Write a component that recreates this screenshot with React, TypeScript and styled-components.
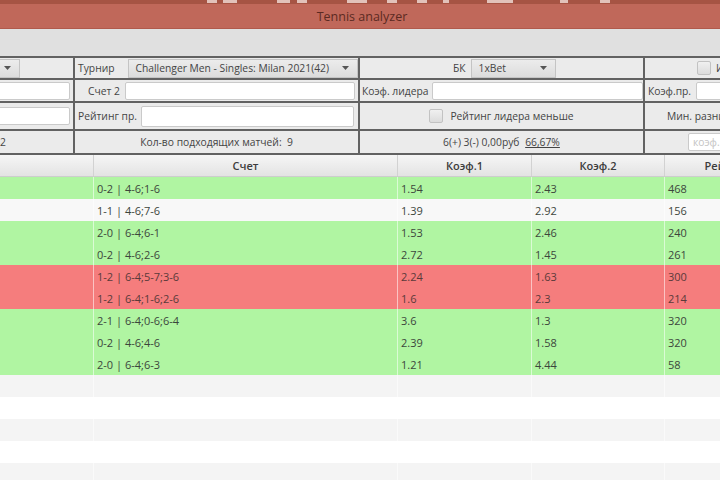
import styled, { createGlobalStyle } from "styled-components";

type RowKind = "win" | "loss" | "plain";
type Match = { score: string; k1: string; k2: string; rating: string; kind: RowKind };

const matches: Match[] = [
  { score: "0-2 | 4-6;1-6", k1: "1.54", k2: "2.43", rating: "468", kind: "win" },
  { score: "1-1 | 4-6;7-6", k1: "1.39", k2: "2.92", rating: "156", kind: "plain" },
  { score: "2-0 | 6-4;6-1", k1: "1.53", k2: "2.46", rating: "240", kind: "win" },
  { score: "0-2 | 4-6;2-6", k1: "2.72", k2: "1.45", rating: "261", kind: "win" },
  { score: "1-2 | 6-4;5-7;3-6", k1: "2.24", k2: "1.63", rating: "300", kind: "loss" },
  { score: "1-2 | 6-4;1-6;2-6", k1: "1.6", k2: "2.3", rating: "214", kind: "loss" },
  { score: "2-1 | 6-4;0-6;6-4", k1: "3.6", k2: "1.3", rating: "320", kind: "win" },
  { score: "0-2 | 4-6;4-6", k1: "2.39", k2: "1.58", rating: "320", kind: "win" },
  { score: "2-0 | 6-4;6-3", k1: "1.21", k2: "4.44", rating: "58", kind: "win" },
];

const rowBg: Record<RowKind, string> = {
  win: "#b0f5a2",
  loss: "#f57d7d",
  plain: "#f8f8f8",
};

// light blocks of the strip cut off at the very top of the shot
const stripBlocks = [
  [207, 10], [223, 14], [277, 13], [297, 10], [347, 20], [387, 10],
  [417, 10], [443, 6], [487, 13], [500, 13], [560, 8], [600, 10],
];

const GlobalStyle = createGlobalStyle`
  body {
    margin: 0;
    font-family: "Open Sans", "DejaVu Sans", sans-serif;
    font-size: 11px;
    color: #3a3a3a;
  }
`;

function Arrow() {
  return (
    <svg width="7" height="4" viewBox="0 0 7 4">
      <path d="M0 0 L7 0 L3.5 4 Z" fill="#555" />
    </svg>
  );
}

function App() {
  return (
    <Window>
      <GlobalStyle />
      <TitleBar>
        <Strip width="720" height="4" viewBox="0 0 720 4">
          <rect x="0" y="0" width="720" height="4" fill="#a65444" />
          {stripBlocks.map(([x, w]) => (
            <rect key={x} x={x} y="0" width={w} height="3" fill="#e2c2ba" />
          ))}
        </Strip>
        <Title>Tennis analyzer</Title>
      </TitleBar>
      <MenuBand />

      <Form>
        <Cell>
          <Combo width={120}>
            <span />
            <Arrow />
          </Combo>
        </Cell>
        <Cell pad={3}>
          <Label>Турнир</Label>
          <Combo grow style={{ marginLeft: 13 }}>
            <span>Challenger Men - Singles: Milan 2021(42)</span>
            <Arrow />
          </Combo>
        </Cell>
        <Cell pad={93}>
          <Label>БК</Label>
          <Combo width={85} style={{ marginLeft: 5 }}>
            <span>1xBet</span>
            <Arrow />
          </Combo>
        </Cell>
        <Cell pad={52}>
          <Check />
          <Label style={{ marginLeft: 5 }}>Игнорировать</Label>
        </Cell>

        <Cell end>
          <Input />
        </Cell>
        <Cell pad={13}>
          <Label>Счет 2</Label>
          <Input grow style={{ marginLeft: 5, marginRight: 3 }} />
        </Cell>
        <Cell pad={2}>
          <Label>Коэф. лидера</Label>
          <Input grow style={{ marginLeft: 4 }} />
        </Cell>
        <Cell pad={3}>
          <Label>Коэф.пр.</Label>
          <Input grow style={{ marginLeft: 5 }} />
        </Cell>

        <Cell end>
          <Input />
        </Cell>
        <Cell pad={3}>
          <Label>Рейтинг пр.</Label>
          <Input grow tall style={{ marginLeft: 4, marginRight: 4 }} />
        </Cell>
        <Cell center>
          <Check />
          <Label style={{ marginLeft: 7 }}>Рейтинг лидера меньше</Label>
        </Cell>
        <Cell pad={22}>
          <Label>Мин. разница коэф.</Label>
        </Cell>

        <Cell end>
          <Label style={{ marginRight: 67 }}>Матчей 1-2</Label>
        </Cell>
        <Cell center>
          <Label>Кол-во подходящих матчей:&nbsp; 9</Label>
        </Cell>
        <Cell center>
          <Label>
            6(+) 3(-) 0,00руб <Underlined>66,67%</Underlined>
          </Label>
        </Cell>
        <Cell pad={43}>
          <Input grow placeholder="коэф. от" />
        </Cell>
      </Form>

      <Table>
        <HeadRow>
          <HeadCell />
          <HeadCell>Счет</HeadCell>
          <HeadCell>Коэф.1</HeadCell>
          <HeadCell>Коэф.2</HeadCell>
          <HeadCell>Рейтинг 1</HeadCell>
        </HeadRow>
        {matches.map((m, i) => (
          <Row key={i} kind={m.kind}>
            <Td />
            <Td>{m.score}</Td>
            <Td>{m.k1}</Td>
            <Td>{m.k2}</Td>
            <Td>{m.rating}</Td>
          </Row>
        ))}
        {[0, 1, 2, 3, 4].map((i) => (
          <EmptyRow key={i} odd={i % 2 === 0}>
            <Td />
            <Td />
            <Td />
            <Td />
            <Td />
          </EmptyRow>
        ))}
      </Table>
    </Window>
  );
}

export default App;

const Window = styled.div`
  width: 720px;
  height: 480px;
  overflow: hidden;
  background: #fff;
`;

const TitleBar = styled.div`
  height: 28px;
  background: #c0685a;
  border-bottom: 1px solid #b05a4c;
  display: flex;
  flex-direction: column;
`;

const Strip = styled.svg`
  display: block;
`;

const Title = styled.div`
  flex: 1;
  display: flex;
  align-items: center;
  justify-content: center;
  padding-left: 4px;
  font-size: 12.5px;
  color: #5b2a22;
`;

const MenuBand = styled.div`
  height: 27px;
  background: #e0e0e0;
`;

const Form = styled.div`
  display: grid;
  grid-template-columns: 173px 283px 283px 200px;
  grid-template-rows: 20px 21px 26px 22px;
  gap: 2px;
  padding: 2px 0;
  margin-left: -100px;
  width: 945px;
  background: #626262;
  font-size: 10.3px;
`;

const Cell = styled.div<{ pad?: number; center?: boolean; end?: boolean }>`
  display: flex;
  align-items: center;
  background: #ebebeb;
  padding-left: ${(p) => p.pad ?? 0}px;
  justify-content: ${(p) => (p.center ? "center" : p.end ? "flex-end" : "flex-start")};
  min-width: 0;
  white-space: nowrap;
`;

const Label = styled.span`
  color: #444;
  white-space: nowrap;
`;

const Underlined = styled.span`
  text-decoration: underline;
  margin-left: 3px;
`;

const Combo = styled.div<{ width?: number; grow?: boolean }>`
  height: 19px;
  box-sizing: border-box;
  ${(p) => (p.grow ? "flex: 1;" : `width: ${p.width}px;`)}
  display: flex;
  align-items: center;
  justify-content: space-between;
  padding: 0 8px 0 7px;
  background: linear-gradient(#ececec, #dcdcdc);
  border: 1px solid #c4c4c4;
  color: #444;
`;

const Input = styled.input<{ grow?: boolean; tall?: boolean }>`
  height: ${(p) => (p.tall ? 21 : 18)}px;
  box-sizing: border-box;
  ${(p) => (p.grow ? "flex: 1; min-width: 0;" : "width: 120px; margin-right: 3px;")}
  background: #fff;
  border: 1px solid #cacaca;
  border-radius: 2px;
  font: inherit;
  padding: 0 4px;
  &::placeholder {
    color: #c4c4c4;
  }
`;

const Check = styled.span`
  width: 12px;
  height: 12px;
  border: 1px solid #c2c2c2;
  border-radius: 2px;
  background: linear-gradient(#f0f0f0, #dcdcdc);
`;

const Table = styled.div`
  margin-left: -100px;
  width: 900px;
`;

const cols = "194px 304px 134px 133px 135px";

const HeadRow = styled.div`
  display: grid;
  grid-template-columns: ${cols};
  height: 22px;
  background: linear-gradient(#f6f6f6, #e3e3e3);
  border-bottom: 1px solid #cdcdcd;
  box-sizing: border-box;
`;

const HeadCell = styled.div`
  display: flex;
  align-items: center;
  justify-content: center;
  border-right: 1px solid #d2d2d2;
  font-weight: 600;
  color: #3c3c3c;
`;

const Row = styled.div<{ kind: RowKind }>`
  display: grid;
  grid-template-columns: ${cols};
  height: 22px;
  background: ${(p) => rowBg[p.kind]};
  color: ${(p) => (p.kind === "loss" ? "#5a3a3a" : "#3c463c")};
`;

const EmptyRow = styled.div<{ odd: boolean }>`
  display: grid;
  grid-template-columns: ${cols};
  height: 22px;
  background: ${(p) => (p.odd ? "#f4f4f4" : "#ffffff")};
`;

const Td = styled.div`
  display: flex;
  align-items: center;
  padding-left: 3px;
  border-right: 1px solid rgba(255, 255, 255, 0.55);
  white-space: nowrap;
  overflow: hidden;
`;
